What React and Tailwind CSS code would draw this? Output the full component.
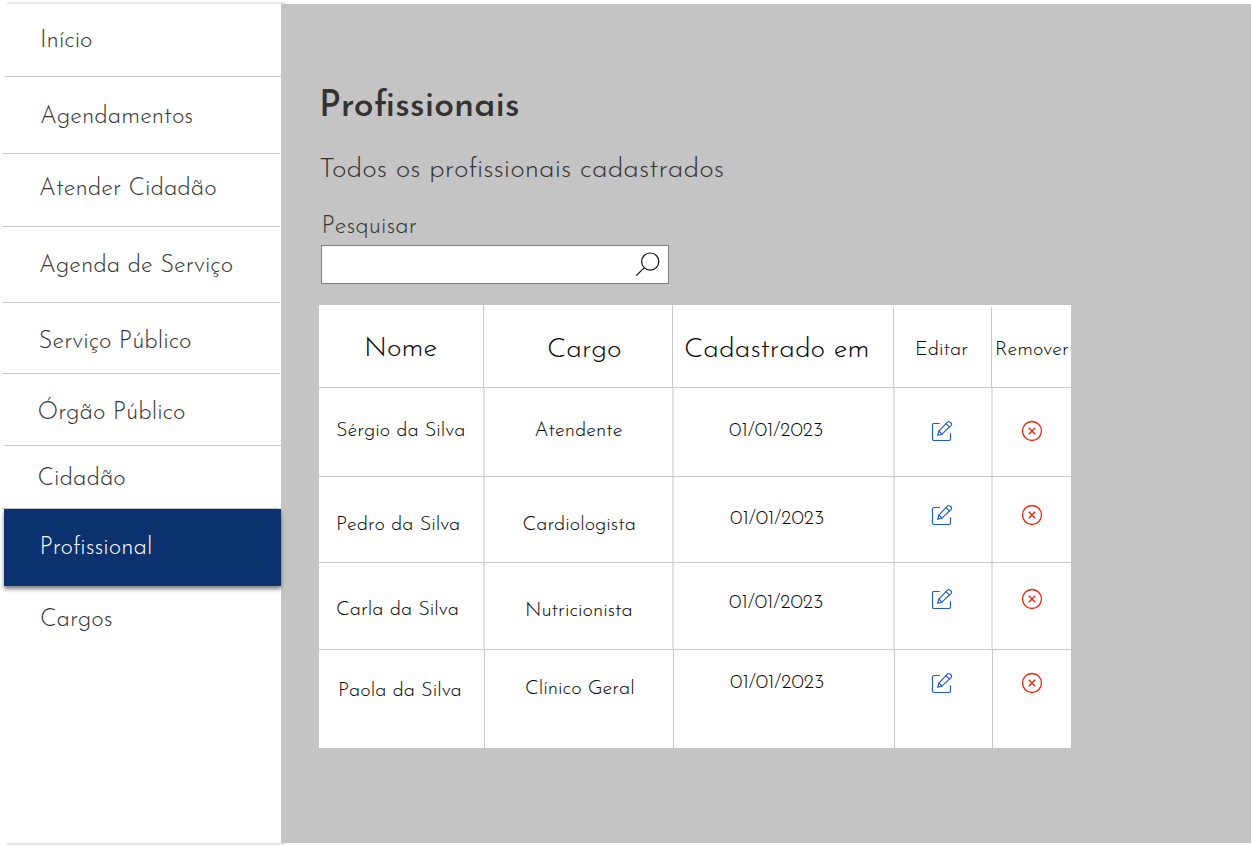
import React from "react";

const menu = [
  { label: "Início", row: "h-[73px] ml-1 w-[277px] border-b", text: "pl-[36px] pt-[25px]" },
  { label: "Agendamentos", row: "h-[77px] ml-[3px] w-[277px] border-b", text: "pl-[37px] pt-[28px]" },
  { label: "Atender Cidadão", row: "h-[73px] ml-[3px] w-[277px] border-b", text: "pl-[36px] pt-[23px]" },
  { label: "Agenda de Serviço", row: "h-[76px] ml-[3px] w-[277px] border-b", text: "pl-[36px] pt-[27px]" },
  { label: "Serviço Público", row: "h-[71px] ml-[3px] w-[277px] border-b", text: "pl-[35.5px] pt-[27px]" },
  { label: "Órgão Público", row: "h-[72px] ml-1 w-[277px] border-b", text: "pl-[33.5px] pt-[27px]" },
  { label: "Cidadão", row: "h-[63px] ml-[2px] w-[277px] border-b", text: "pl-[35.5px] pt-[21px]" },
  {
    label: "Profissional",
    row: "relative z-10 h-[77px] ml-1 w-[277px] bg-[#0b316f] text-white shadow-[0_3px_4px_rgba(0,0,0,0.5)]",
    text: "pl-[35.5px] pt-[27px]",
  },
  { label: "Cargos", row: "h-[72px] ml-1 w-[277px]", text: "pl-[36px] pt-[22px]" },
];

const headers = [
  { label: "Nome", cls: "border-r pl-[45px] pt-[30px] text-[28px] leading-[28px]" },
  { label: "Cargo", cls: "border-r pl-[63px] pt-[31px] text-[28px] leading-[28px]" },
  { label: "Cadastrado em", cls: "mt-[2px] border-r pl-[11px] pt-[29px] text-[28px] leading-[28px]" },
  { label: "Editar", cls: "mt-[2px] border-r pl-[21px] pt-[33px] text-[20px] leading-[20px]" },
  { label: "Remover", cls: "pl-[3px] pt-[35px] text-[20px] leading-[20px]" },
];

const rows = [
  {
    row: "h-[89px] border-b",
    line: "border-r-2 border-[#e2e2e2]",
    name: ["Sérgio da Silva", "pl-[17px] pt-[33px]"],
    role: ["Atendente", "pl-[49.5px] pt-[33px]"],
    date: ["01/01/2023", "pl-[55px] pt-[33px]"],
    icon: "pt-[32px]",
  },
  {
    row: "h-[86px] border-b",
    line: "border-r-2 border-[#e2e2e2]",
    name: ["Pedro da Silva", "pl-[17px] pt-[38px]"],
    role: ["Cardiologista", "pl-[37.5px] pt-[38px]"],
    date: ["01/01/2023", "pl-[56px] pt-[32px]"],
    icon: "pt-[27px]",
  },
  {
    row: "h-[87px] border-b",
    line: "border-r-2 border-[#e2e2e2]",
    name: ["Carla da Silva", "pl-[17px] pt-[37px]"],
    role: ["Nutricionista", "pl-[40px] pt-[38px]"],
    date: ["01/01/2023", "pl-[55px] pt-[30px]"],
    icon: "pt-[25px]",
  },
  {
    row: "h-[98px]",
    line: "border-r border-[#c8c8c8]",
    name: ["Paola da Silva", "pl-[19px] pt-[31px]"],
    role: ["Clínico Geral", "pl-[40px] pt-[29px]"],
    date: ["01/01/2023", "pl-[56px] pt-[23px]"],
    icon: "pt-[22px]",
  },
];

function EditIcon() {
  return (
    <svg width="22" height="22" viewBox="0 0 22 22" fill="none" stroke="#1d5bbf" strokeWidth="1.15" strokeLinecap="round" strokeLinejoin="round">
      <path d="M8.3 3.5H2.9a1.4 1.4 0 0 0-1.4 1.4v14.2a1.4 1.4 0 0 0 1.4 1.4h15.2a1.4 1.4 0 0 0 1.4-1.4v-5.6" />
      <path d="M6.6 15.3l1.3-4.2 8.5-9a1.9 1.9 0 0 1 2.7 0l.9.9a1.9 1.9 0 0 1 0 2.6l-9.1 8.6z" />
      <path d="M15.1 3.6l3.4 3.5M7.9 11.1l3 3.1" />
    </svg>
  );
}

function RemoveIcon() {
  return (
    <svg width="22" height="22" viewBox="0 0 22 22" fill="none" stroke="#e8250c">
      <circle cx="11" cy="11" r="9.5" strokeWidth="1.3" />
      <path d="M7.8 7.8l6.4 6.4M14.2 7.8l-6.4 6.4" strokeWidth="1.4" />
    </svg>
  );
}

function SearchIcon() {
  return (
    <svg width="26" height="26" viewBox="0 0 26 26" fill="none" stroke="#111" strokeWidth="1.2">
      <circle cx="15.2" cy="9.6" r="8.6" />
      <path d="M9.1 15.8L1.2 23.7" />
    </svg>
  );
}

export default function App() {
  return (
    <div className="flex h-[847px] w-[1251px] flex-col overflow-hidden bg-white font-['Josefin_Sans',Lato,sans-serif] font-light text-[#333]">
      <div className="ml-[7px] h-1 w-[278px] shrink-0 bg-linear-to-t from-[#dcdcdc] to-white to-80%" />
      <div className="flex h-[839px] shrink-0">
        <nav className="w-[281px] shrink-0 text-[24px] leading-[24px]">
          {menu.map((m) => (
            <div key={m.label} className={`border-[#c8c8c8] ${m.row}`}>
              <div className={m.text}>{m.label}</div>
            </div>
          ))}
        </nav>
        <main className="flex flex-1 flex-col items-start bg-[#c4c4c4]">
          <h1 className="ml-[38px] mt-[85px] text-[36px] leading-[36px] font-medium">Profissionais</h1>
          <p className="ml-[38px] mt-[31px] text-[28px] leading-[28px]">Todos os profissionais cadastrados</p>
          <label className="ml-[40.5px] mt-[31px] text-[24px] leading-[24px]">Pesquisar</label>
          <div className="ml-[40px] mt-[6px] flex h-[39px] w-[348px] justify-end border border-[#808080] bg-white pr-[7px] pt-[6px]">
            <SearchIcon />
          </div>
          <div className="ml-[38px] mt-[21px] w-[752px] bg-white text-black">
            <div className="grid h-[83px] grid-cols-[165px_189px_221px_98px_79px] border-b border-[#c8c8c8]">
              {headers.map((h) => (
                <div key={h.label} className={`border-[#c8c8c8] whitespace-nowrap ${h.cls}`}>{h.label}</div>
              ))}
            </div>
            {rows.map((r) => (
              <div
                key={r.name[0]}
                className={`grid grid-cols-[166px_189px_221px_98px_78px] border-[#c8c8c8] text-[20px] leading-[20px] whitespace-nowrap ${r.row}`}
              >
                <div className={`${r.line} ${r.name[1]}`}>{r.name[0]}</div>
                <div className={`${r.line} ${r.role[1]}`}>{r.role[0]}</div>
                <div className={`${r.line} ${r.date[1]}`}>{r.date[0]}</div>
                <div className={`${r.line} pl-[36px] ${r.icon}`}><EditIcon /></div>
                <div className={`pl-[28px] ${r.icon}`}><RemoveIcon /></div>
              </div>
            ))}
          </div>
        </main>
      </div>
      <div className="ml-[7px] h-1 w-[278px] shrink-0 bg-linear-to-b from-[#dcdcdc] to-white to-80%" />
    </div>
  );
}
